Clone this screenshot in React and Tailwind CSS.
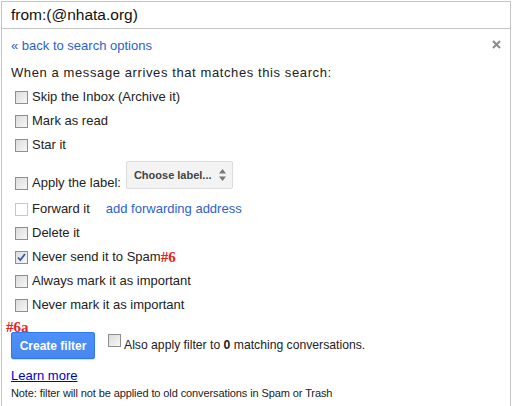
import React from 'react';

function Box({ checked = false, disabled = false }) {
  return (
    <span
      className={`relative inline-block w-[13px] h-[13px] shrink-0 border ${
        disabled ? 'border-[#c9c9c9] bg-white' : 'border-[#8e8e8e] bg-gradient-to-br from-[#dcdcdc] to-[#f7f7f7]'
      }`}
    >
      {checked && (
        <svg viewBox="0 0 11 11" className="absolute inset-0 w-[11px] h-[11px]">
          <path d="M2 5.5 L4.3 8 L9 2" fill="none" stroke="#3b5aa8" strokeWidth="1.8" />
        </svg>
      )}
    </span>
  );
}

function Row({ label, checked, disabled, children }) {
  return (
    <div className="h-6 flex items-center pl-[4px]">
      <Box checked={checked} disabled={disabled} />
      <span className="ml-[4px]">{label}</span>
      {children}
    </div>
  );
}

const tag = 'font-["Liberation_Serif",serif] font-bold text-[15px] text-[#e8221c]';

export default function App() {
  return (
    <div className="w-[513px] h-[406px] bg-white pt-[1px] pl-[1px] overflow-hidden font-['Liberation_Sans',Arial,sans-serif] text-[#222]">
      <div className="w-[510px] h-[28px] border border-[#c4c4c4] flex items-center pl-[9px] text-[15.5px] text-[#111]">
        from:(@nhata.org)
      </div>
      <div className="w-[510px] h-[400px] border-x border-[#c4c4c4] pl-[9px] text-[13px]">
        <div className="h-[34px] flex items-center justify-between pr-[9px]">
          <span className="text-[#2b5fcf]">« back to search options</span>
          <svg viewBox="0 0 9 9" className="w-[9px] h-[9px] -mt-[4px]">
            <path d="M1 1 L8 8 M8 1 L1 8" stroke="#8a8a8a" strokeWidth="2" />
          </svg>
        </div>
        <div className="h-[20px] flex items-center tracking-[0.6px]">When a message arrives that matches this search:</div>
        <div className="mt-[2px]">
          <Row label="Skip the Inbox (Archive it)" />
          <Row label="Mark as read" />
          <Row label="Star it" />
          <div className="h-10 flex items-start">
            <div className="mt-[14px] h-6 flex items-center pl-[4px]">
              <Box />
              <span className="ml-[4px]">Apply the label:</span>
            </div>
            <div className="mt-1 ml-[5px] w-[107px] h-[28px] rounded-[2px] border border-[#dcdcdc] bg-[#f3f3f3] flex items-center justify-between pl-[7px] pr-[6px] text-[11px] font-bold text-[#444]">
              <span>Choose label...</span>
              <svg viewBox="0 0 7 12" className="w-[7px] h-[12px]">
                <path d="M3.5 0 L7 4.5 L0 4.5 Z M3.5 12 L7 7.5 L0 7.5 Z" fill="#777" />
              </svg>
            </div>
          </div>
          <Row label="Forward it" disabled>
            <span className="ml-[16px] text-[#2b5fcf]">add forwarding address</span>
          </Row>
          <Row label="Delete it" />
          <Row label="Never send it to Spam" checked>
            <span className={tag}>#6</span>
          </Row>
          <Row label="Always mark it as important" />
          <Row label="Never mark it as important" />
        </div>
        <div className="mt-[15px] h-[27px] flex items-center">
          <div className="relative">
            <div className="w-[84px] h-[27px] rounded-[2px] border border-[#3079ed] bg-gradient-to-b from-[#4d90fe] to-[#4787ed] shadow-[0_1px_1px_rgba(0,0,0,0.15)] flex items-center justify-center text-white font-bold text-[12px]">
              Create filter
            </div>
            <span className={`absolute left-[-5px] top-[-12px] leading-none ${tag}`}>#6a</span>
          </div>
          <div className="ml-[13px] -mt-[6px]">
            <Box />
          </div>
          <span className="ml-[3px] text-[12.2px]">
            Also apply filter to <b>0</b> matching conversations.
          </span>
        </div>
        <div className="mt-[9px] h-4 flex items-center">
          <span className="text-[#0000cc] underline">Learn more</span>
        </div>
        <div className="mt-[2px] h-[14px] flex items-center text-[11px] tracking-[-0.1px]">
          Note: filter will not be applied to old conversations in Spam or Trash
        </div>
      </div>
    </div>
  );
}
